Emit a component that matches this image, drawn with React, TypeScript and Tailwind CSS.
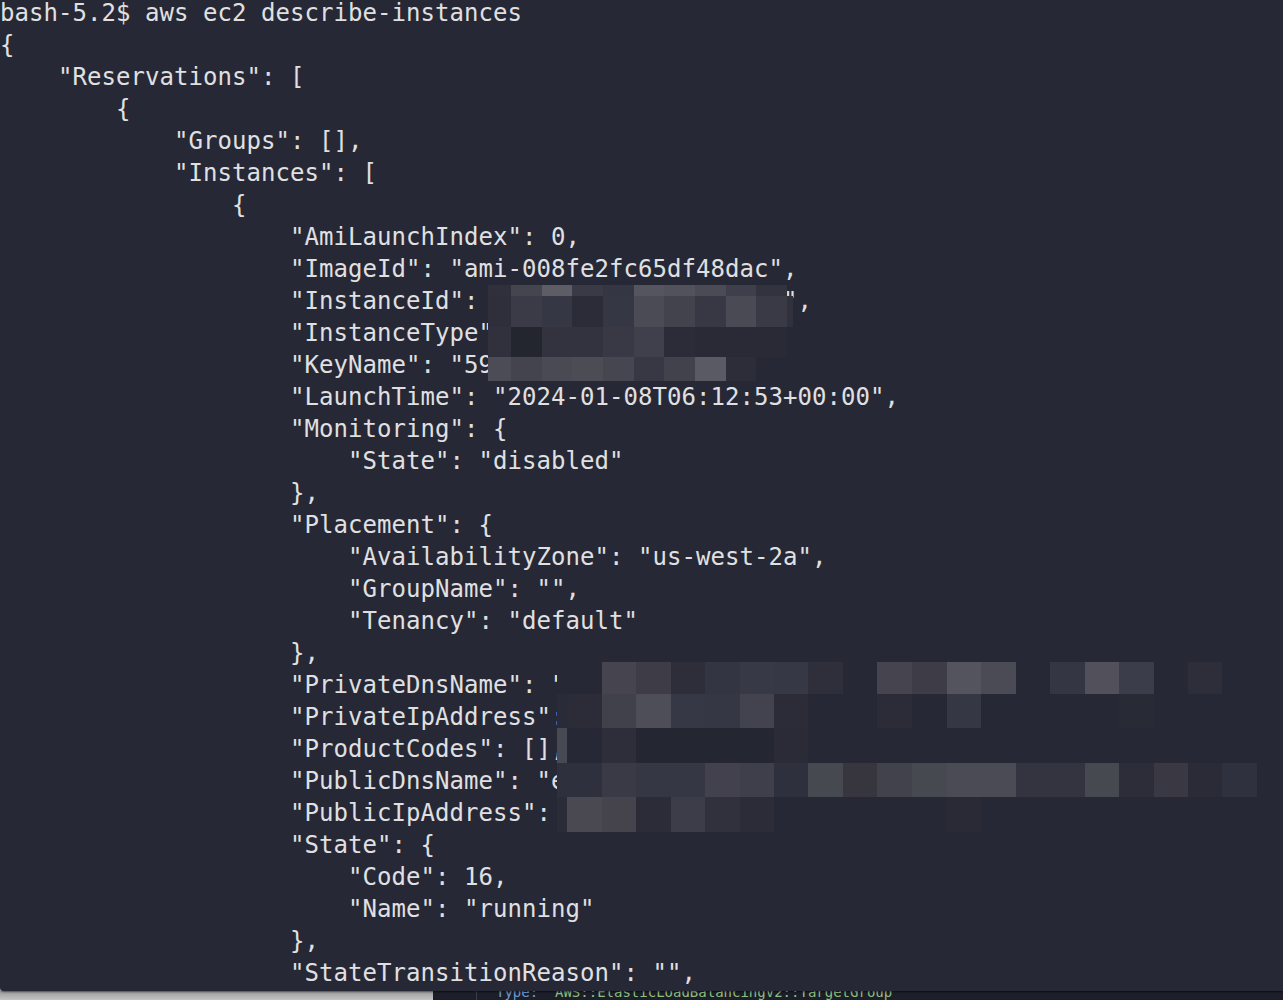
import React from "react";

const LINES: string[] = [
  'bash-5.2$ aws ec2 describe-instances',
  '{',
  '    "Reservations": [',
  '        {',
  '            "Groups": [],',
  '            "Instances": [',
  '                {',
  '                    "AmiLaunchIndex": 0,',
  '                    "ImageId": "ami-008fe2fc65df48dac",',
  '                    "InstanceId":                     ",',
  '                    "InstanceType"',
  '                    "KeyName": "59',
  '                    "LaunchTime": "2024-01-08T06:12:53+00:00",',
  '                    "Monitoring": {',
  '                        "State": "disabled"',
  '                    },',
  '                    "Placement": {',
  '                        "AvailabilityZone": "us-west-2a",',
  '                        "GroupName": "",',
  '                        "Tenancy": "default"',
  '                    },',
  '                    "PrivateDnsName": "',
  '                    "PrivateIpAddress":',
  '                    "ProductCodes": [],',
  '                    "PublicDnsName": "e',
  '                    "PublicIpAddress":',
  '                    "State": {',
  '                        "Code": 16,',
  '                        "Name": "running"',
  '                    },',
  '                    "StateTransitionReason": "",',
];

type Cell = [number, number, number, number, string];

function row(y: number, h: number, edges: number[], colors: (string | null)[]): Cell[] {
  const out: Cell[] = [];
  for (let i = 0; i < colors.length; i++) {
    const c = colors[i];
    if (c) out.push([edges[i], y, edges[i + 1] - edges[i], h, c]);
  }
  return out;
}

const BG = "#262835";
const E1 = [488, 511, 542, 572, 603, 634, 664, 695, 726, 756, 787, 793];
const E2 = [557, 567, 602, 636, 671, 705, 740, 774, 808, 843, 877, 912, 947, 981, 1016, 1050, 1085, 1119, 1154, 1188, 1222, 1257];

const CELLS: Cell[] = [
  ...row(285, 11, E1, ["#2f303c", "#45454f", "#5d5d66", "#393a45", "#353643", "#55555f", "#52525c", "#4a4b55", "#3e3f4b", "#33333f"]),
  ...row(296, 31, E1, ["#2e2f3b", "#3a3b47", "#363744", "#2b2c38", "#363744", "#4a4b54", "#42434d", "#383844", "#4a4a54", "#393a46", "#30313d"]),
  ...row(327, 30, E1, ["#30313d", "#23252f", "#32333f", "#32333f", "#383945", "#3f404b", "#2b2c38", "#292a36", "#292a36", "#292a36"]),
  ...row(357, 24, E1, ["#4b4c55", "#44444e", "#494a53", "#4c4c55", "#45464f", "#373844", "#42424d", "#595a63", "#2c2d39"]),
  ...row(662, 32, E2, [BG, BG, "#45444f", "#3d3c47", "#2d2e3a", "#343542", "#383946", "#373845", "#2e2f3b", null, "#45444f", "#3d3c47", "#54545e", "#4a4b54", null, "#353643", "#51505b", "#3c3d4a", null, "#2d2e3a"]),
  ...row(694, 34, E2, ["#2a2b38", "#2b2c38", "#40414b", "#4d4e57", "#373845", "#363744", "#42434e", "#2b2c38", null, null, "#2b2c38", null, "#363744", null, null, null, null, "#282a36"]),
  ...row(728, 35, E2, ["#474a52", BG, "#2d2e3a", "#242632", "#242632", "#242632", "#242632", "#2a2b37"]),
  ...row(763, 34, E2, ["#2f303d", "#2f303d", "#3a3a46", "#363744", "#363744", "#42414d", "#3e3f4b", "#2f303d", "#474950", "#37363f", "#41424c", "#474950", "#4a4b55", "#4a4b55", "#343440", "#343440", "#474950", "#2c2d39", "#393843", "#2a2b37", "#30313e"]),
  ...row(797, 35, E2, ["#2b2c38", "#4a4951", "#45444d", "#2b2c38", "#3c3d49", "#30313d", "#2b2c38", null, null, null, null, null, "#292a36"]),
];

const MONO = '"DejaVu Sans Mono", "Liberation Mono", monospace';

export default function App() {
  return (
    <div className="w-[1283px] h-[1000px] flex flex-col overflow-hidden bg-[#bdbdbd]">
      <div className="relative h-[991px] bg-[#262835] overflow-hidden rounded-bl-[4px] shadow-[0_1px_2px_rgba(0,0,0,0.5)]">
        <div
          className="text-[24px] leading-[32px] tracking-[0.05px] text-[#e0e0e2] whitespace-pre -mt-[3px]"
          style={{ fontFamily: MONO }}
        >
          {LINES.map((l, i) => (
            <div key={i} className="h-[32px]">{l}</div>
          ))}
        </div>
        {CELLS.map(([x, y, w, h, c], i) => (
          <div
            key={i}
            className="absolute"
            style={{ left: x, top: y, width: w, height: h, backgroundColor: c }}
          />
        ))}
      </div>
      <div className="flex flex-1 min-h-0">
        <div className="w-[433px] bg-gradient-to-b from-[#9a9a9a] to-[#c4c4c4]" />
        <div className="flex-1 bg-[#1c1e29] overflow-hidden flex">
          <div className="w-[44px] border-r border-[#3a3c48]" />
          <div
            className="-mt-[7px] pl-[19px] text-[14px] leading-[16px] whitespace-pre"
            style={{ fontFamily: MONO }}
          >
            <span className="text-[#6c9bd2]">Type:</span>
            <span className="text-[#8fbf7f]">  AWS::ElasticLoadBalancingV2::TargetGroup</span>
          </div>
        </div>
      </div>
    </div>
  );
}
